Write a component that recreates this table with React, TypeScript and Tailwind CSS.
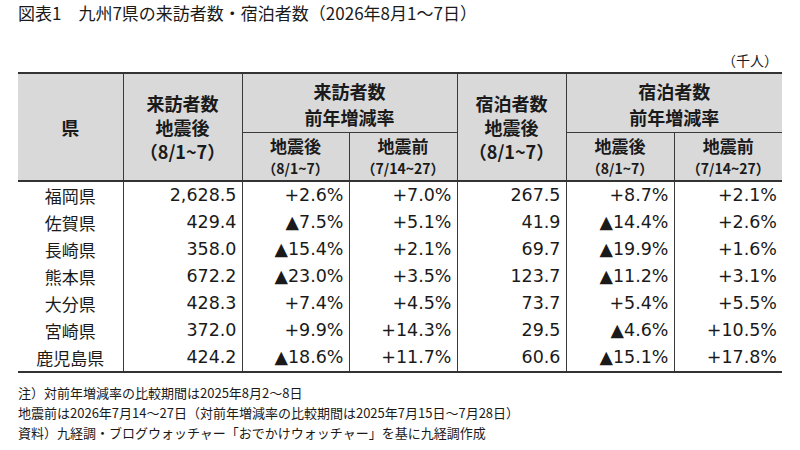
const JP = "font-['Noto_Sans_CJK_JP','Noto_Sans',sans-serif]"
const NUM = "font-['DejaVu_Sans','Noto_Sans_CJK_JP',sans-serif]"

type Row = {
  pref: string
  visitors: string
  vAfter: string
  vBefore: string
  stays: string
  sAfter: string
  sBefore: string
}

const rows: Row[] = [
  { pref: "福岡県", visitors: "2,628.5", vAfter: "+2.6%", vBefore: "+7.0%", stays: "267.5", sAfter: "+8.7%", sBefore: "+2.1%" },
  { pref: "佐賀県", visitors: "429.4", vAfter: "▲7.5%", vBefore: "+5.1%", stays: "41.9", sAfter: "▲14.4%", sBefore: "+2.6%" },
  { pref: "長崎県", visitors: "358.0", vAfter: "▲15.4%", vBefore: "+2.1%", stays: "69.7", sAfter: "▲19.9%", sBefore: "+1.6%" },
  { pref: "熊本県", visitors: "672.2", vAfter: "▲23.0%", vBefore: "+3.5%", stays: "123.7", sAfter: "▲11.2%", sBefore: "+3.1%" },
  { pref: "大分県", visitors: "428.3", vAfter: "+7.4%", vBefore: "+4.5%", stays: "73.7", sAfter: "+5.4%", sBefore: "+5.5%" },
  { pref: "宮崎県", visitors: "372.0", vAfter: "+9.9%", vBefore: "+14.3%", stays: "29.5", sAfter: "▲4.6%", sBefore: "+10.5%" },
  { pref: "鹿児島県", visitors: "424.2", vAfter: "▲18.6%", vBefore: "+11.7%", stays: "60.6", sAfter: "▲15.1%", sBefore: "+17.8%" },
]

// header cells share the grey fill and bold CJK face; keep full-width brackets untrimmed
const th = `bg-[#d9d9d9] ${JP} font-bold text-[18px] leading-[24px] text-[#1a1a1a] text-center align-middle [text-spacing-trim:space-all]`
const vline = "border-l-[1.5px] border-[#3a3a3a]"

function SubHead({ label, range }: { label: string; range: string }) {
  return (
    <th className={`${th} ${vline} border-t border-[#3a3a3a] h-[49px]`}>
      <div className="text-[17px] leading-[24px]">{label}</div>
      <div className="text-[14px] leading-[20px]">{range}</div>
    </th>
  )
}

export default function App() {
  return (
    <div className="w-[800px] h-[450px] bg-white text-[#1a1a1a] pt-[2px] px-[18px] overflow-hidden">
      <div className={`${JP} text-[17px] leading-[22px]`}>
        図表1　九州7県の来訪者数・宿泊者数（2026年8月1～7日）
      </div>
      <div className={`${JP} text-[14px] leading-[18px] text-right pr-[4px] mt-[27px]`}>
        （千人）
      </div>

      <table className="mt-[3px] w-[764px] table-fixed border-collapse">
        <colgroup>
          <col className="w-[105px]" />
          <col className="w-[119px]" />
          <col className="w-[107px]" />
          <col className="w-[108px]" />
          <col className="w-[109px]" />
          <col className="w-[108px]" />
          <col className="w-[108px]" />
        </colgroup>
        <thead>
          <tr className="border-t-2 border-[#333]">
            <th rowSpan={2} className={th}>県</th>
            <th rowSpan={2} className={`${th} ${vline}`}>
              <div>来訪者数</div>
              <div>地震後</div>
              <div>（8/1~7）</div>
            </th>
            <th colSpan={2} className={`${th} ${vline} h-[59px] pt-[2px]`}>
              <div className="leading-[26px]">来訪者数</div>
              <div className="leading-[26px]">前年増減率</div>
            </th>
            <th rowSpan={2} className={`${th} ${vline}`}>
              <div>宿泊者数</div>
              <div>地震後</div>
              <div>（8/1~7）</div>
            </th>
            <th colSpan={2} className={`${th} ${vline} h-[59px] pt-[2px]`}>
              <div className="leading-[26px]">宿泊者数</div>
              <div className="leading-[26px]">前年増減率</div>
            </th>
          </tr>
          <tr className="border-b-2 border-[#333]">
            <SubHead label="地震後" range="（8/1~7）" />
            <SubHead label="地震前" range="（7/14~27）" />
            <SubHead label="地震後" range="（8/1~7）" />
            <SubHead label="地震前" range="（7/14~27）" />
          </tr>
        </thead>
        <tbody className="border-b-2 border-[#333]">
          {rows.map((r) => (
            <tr key={r.pref} className="h-[27px]">
              <td className={`${JP} text-[17px] leading-[27px] text-center`}>{r.pref}</td>
              {[r.visitors, r.vAfter, r.vBefore, r.stays, r.sAfter, r.sBefore].map((v, i) => (
                <td
                  key={i}
                  className={`${NUM} ${vline} text-[17.5px] leading-[27px] text-right pr-[5px] whitespace-nowrap`}
                >
                  {v}
                </td>
              ))}
            </tr>
          ))}
        </tbody>
      </table>

      <div className={`${JP} text-[13px] leading-[20px] mt-[10px]`}>
        <div>注）対前年増減率の比較期間は2025年8月2～8日</div>
        <div>地震前は2026年7月14～27日（対前年増減率の比較期間は2025年7月15日～7月28日）</div>
        <div>資料）九経調・ブログウォッチャー「おでかけウォッチャー」を基に九経調作成</div>
      </div>
    </div>
  )
}
